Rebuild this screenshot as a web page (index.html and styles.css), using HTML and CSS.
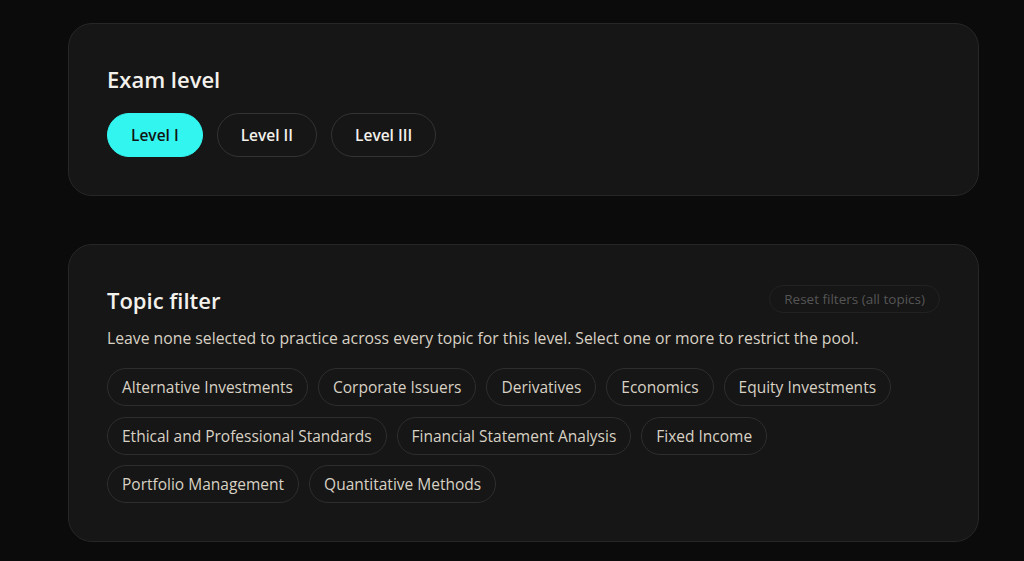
FILE: index.html
```html
<!DOCTYPE html>
<html>
<head>
<meta charset="utf-8">
<link rel="stylesheet" href="styles.css">
</head>
<body>
<main class="page">
  <section class="card">
    <h2 class="title">Exam level</h2>
    <div class="levels">
      <button class="level active">Level I</button>
      <button class="level">Level II</button>
      <button class="level">Level III</button>
    </div>
  </section>
  <section class="card topics">
    <div class="head">
      <h2 class="title">Topic filter</h2>
      <button class="reset">Reset filters (all topics)</button>
    </div>
    <p class="desc">Leave none selected to practice across every topic for this level. Select one or more to restrict the pool.</p>
    <div class="chips">
      <button class="chip">Alternative Investments</button>
      <button class="chip">Corporate Issuers</button>
      <button class="chip">Derivatives</button>
      <button class="chip">Economics</button>
      <button class="chip">Equity Investments</button>
      <button class="chip">Ethical and Professional Standards</button>
      <button class="chip">Financial Statement Analysis</button>
      <button class="chip">Fixed Income</button>
      <button class="chip">Portfolio Management</button>
      <button class="chip">Quantitative Methods</button>
    </div>
  </section>
</main>
</body>
</html>
```
FILE: styles.css
```css
html, body {
  margin: 0;
  padding: 0;
  background: #0b0b0b;
  font-family: "Open Sans", "Noto Sans", sans-serif;
}
.page {
  width: 911px;
  margin-left: 68px;
  padding-top: 23px;
  display: flex;
  flex-direction: column;
  gap: 48px;
}
.card {
  box-sizing: border-box;
  background: #161616;
  border: 1px solid #272727;
  border-radius: 24px;
  padding: 40px 38px 38px 38px;
}
.title {
  margin: 0;
  color: #f3f1ec;
  font-size: 22px;
  font-weight: 600;
  line-height: 30px;
}
.levels {
  display: flex;
  gap: 14px;
  margin-top: 19px;
}
.level {
  height: 44px;
  padding: 0 23px;
  border-radius: 22px;
  border: 1px solid #333;
  background: #161616;
  color: #f3f1ec;
  font-family: inherit;
  font-size: 15.5px;
  font-weight: 600;
}
.level.active {
  background: #33f5ef;
  border-color: #33f5ef;
  color: #121212;
}
.head {
  display: flex;
  justify-content: space-between;
  align-items: flex-start;
}
.reset {
  height: 28px;
  padding: 0 14px;
  border-radius: 14px;
  border: 1px solid #222;
  background: #161616;
  color: #555;
  font-family: inherit;
  font-size: 13.5px;
}
.desc {
  margin: 11px 0 0 0;
  color: #d8d1c4;
  font-size: 15.75px;
  line-height: 24px;
}
.chips {
  display: flex;
  flex-wrap: wrap;
  gap: 10.5px 10px;
  margin-top: 18px;
}
.chip {
  height: 38px;
  padding: 0 14px;
  border-radius: 19px;
  border: 1px solid #2e2e2e;
  background: #161616;
  color: #d8d1c4;
  font-family: inherit;
  font-size: 15.5px;
}
```
